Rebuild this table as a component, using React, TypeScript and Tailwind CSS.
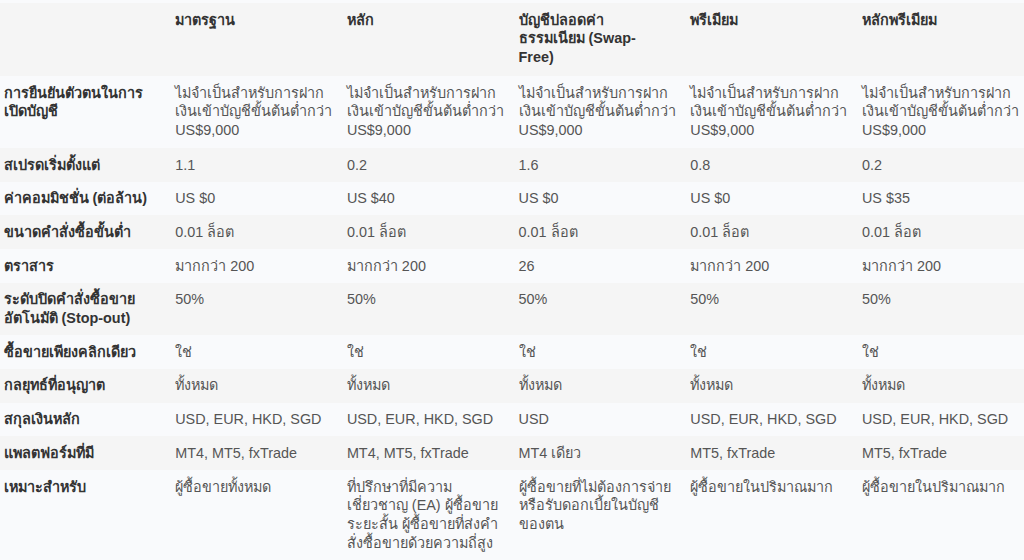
const headers = ["", "มาตรฐาน", "หลัก", "บัญชีปลอดค่า\nธรรมเนียม (Swap-\nFree)", "พรีเมียม", "หลักพรีเมียม"];

const minDeposit = "ไม่จำเป็นสำหรับการฝาก\nเงินเข้าบัญชีขั้นต้นต่ำกว่า\nUS$9,000";

const rows: string[][] = [
  ["การยืนยันตัวตนในการ\nเปิดบัญชี", minDeposit, minDeposit, minDeposit, minDeposit, minDeposit],
  ["สเปรดเริ่มตั้งแต่", "1.1", "0.2", "1.6", "0.8", "0.2"],
  ["ค่าคอมมิชชั่น (ต่อล้าน)", "US $0", "US $40", "US $0", "US $0", "US $35"],
  ["ขนาดคำสั่งซื้อขั้นต่ำ", "0.01 ล็อต", "0.01 ล็อต", "0.01 ล็อต", "0.01 ล็อต", "0.01 ล็อต"],
  ["ตราสาร", "มากกว่า 200", "มากกว่า 200", "26", "มากกว่า 200", "มากกว่า 200"],
  ["ระดับปิดคำสั่งซื้อขาย\nอัตโนมัติ (Stop-out)", "50%", "50%", "50%", "50%", "50%"],
  ["ซื้อขายเพียงคลิกเดียว", "ใช่", "ใช่", "ใช่", "ใช่", "ใช่"],
  ["กลยุทธ์ที่อนุญาต", "ทั้งหมด", "ทั้งหมด", "ทั้งหมด", "ทั้งหมด", "ทั้งหมด"],
  ["สกุลเงินหลัก", "USD, EUR, HKD, SGD", "USD, EUR, HKD, SGD", "USD", "USD, EUR, HKD, SGD", "USD, EUR, HKD, SGD"],
  ["แพลตฟอร์มที่มี", "MT4, MT5, fxTrade", "MT4, MT5, fxTrade", "MT4 เดียว", "MT5, fxTrade", "MT5, fxTrade"],
  [
    "เหมาะสำหรับ",
    "ผู้ซื้อขายทั้งหมด",
    "ที่ปรึกษาที่มีความ\nเชี่ยวชาญ (EA) ผู้ซื้อขาย\nระยะสั้น ผู้ซื้อขายที่ส่งคำ\nสั่งซื้อขายด้วยความถี่สูง",
    "ผู้ซื้อขายที่ไม่ต้องการจ่าย\nหรือรับดอกเบี้ยในบัญชี\nของตน",
    "ผู้ซื้อขายในปริมาณมาก",
    "ผู้ซื้อขายในปริมาณมาก",
  ],
];

export default function App() {
  return (
    <div className="min-h-[560px] w-[1024px] overflow-hidden bg-[#f9fafc] pt-[3px] font-['Liberation_Sans',Arial,sans-serif] text-[14.4px] leading-[18.7px]">
      <table className="w-[1030px] table-fixed border-collapse">
        <colgroup>
          {headers.map((_, i) => (
            <col key={i} className="w-[171.7px]" />
          ))}
        </colgroup>
        <thead>
          <tr className="h-[73px] bg-[#f5f5f5]">
            {headers.map((h, i) => (
              <th key={i} className="whitespace-pre-line px-[3.5px] py-[7.5px] text-left align-top font-bold text-[#333]">
                {h}
              </th>
            ))}
          </tr>
        </thead>
        <tbody>
          {rows.map((r, ri) => (
            <tr key={ri} className={`${ri === 0 ? "h-[72px]" : ""} ${ri % 2 === 1 ? "bg-[#f5f5f5]" : "bg-[#f9fafc]"}`}>
              {r.map((c, ci) => (
                <td
                  key={ci}
                  className={`whitespace-pre-line px-[3.5px] py-[7.5px] align-top ${ci === 0 ? "font-bold text-[#333]" : "text-[#555]"}`}
                >
                  {c}
                </td>
              ))}
            </tr>
          ))}
        </tbody>
      </table>
    </div>
  );
}
